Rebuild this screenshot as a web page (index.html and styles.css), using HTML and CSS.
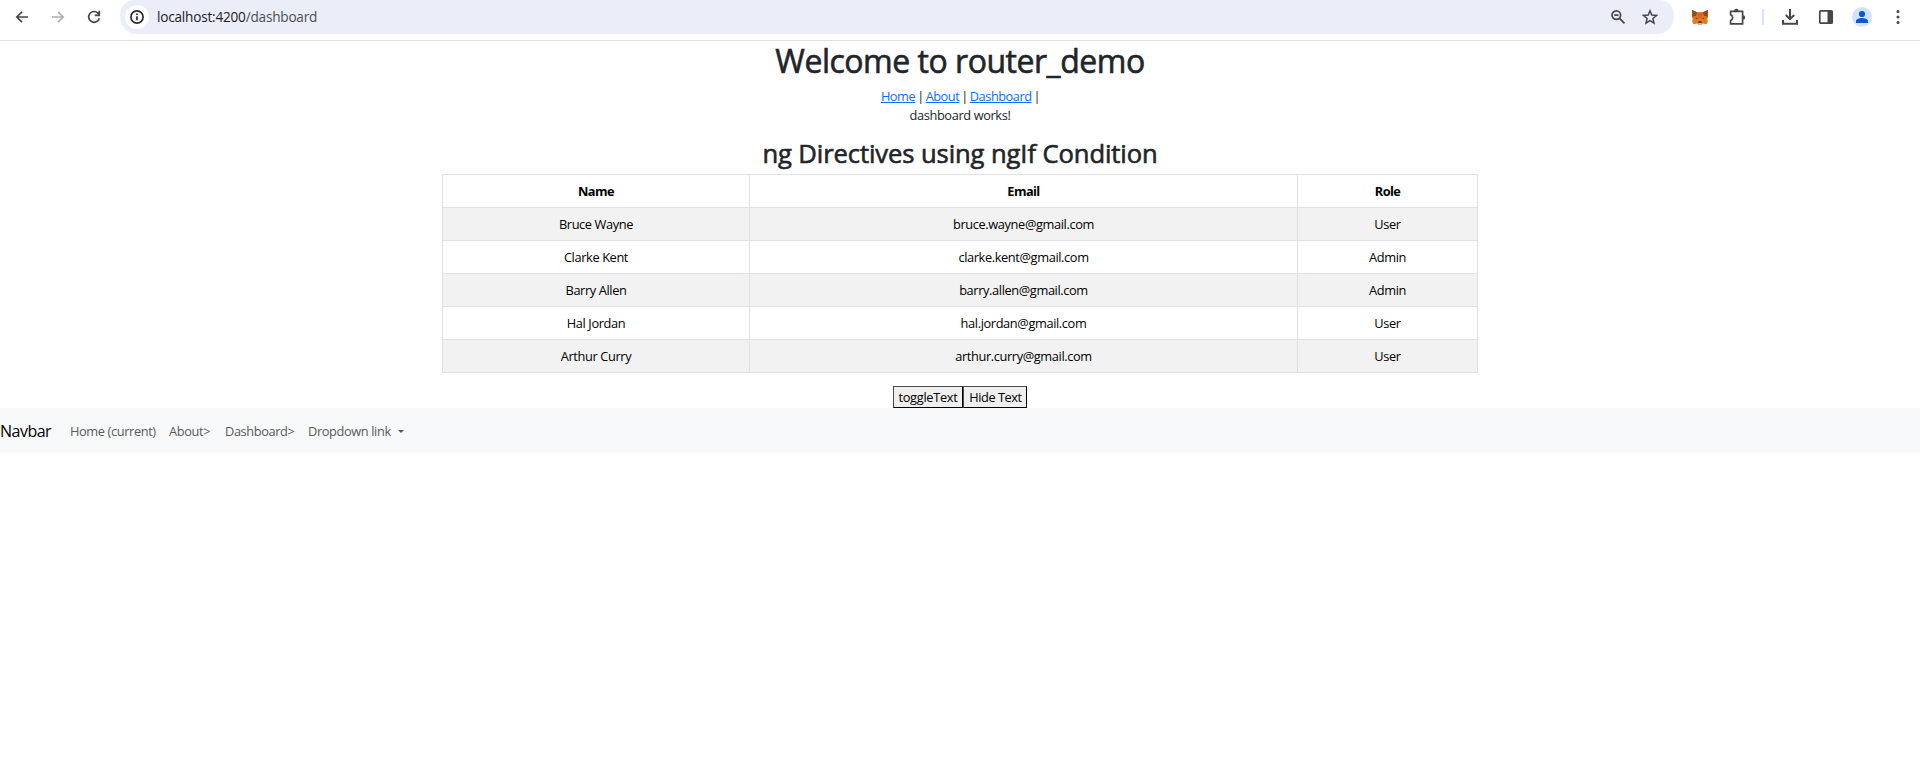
FILE: index.html
```html
<!DOCTYPE html>
<html lang="en">
<head>
<meta charset="utf-8">
<title>RouterDemo</title>
<link rel="stylesheet" href="styles.css">
</head>
<body>
<header class="toolbar">
  <div class="nav-buttons">
    <svg class="icon" viewBox="0 0 16 16"><path d="M14 8H3M8 2.8 2.8 8 8 13.2" /></svg>
    <svg class="icon disabled" viewBox="0 0 16 16"><path d="M2 8h11M8 2.8 13.2 8 8 13.2" /></svg>
    <svg class="icon" viewBox="0 0 16 16"><path d="M13.3 9.2A5.4 5.4 0 1 1 12 4.2L13.2 5.6M13.3 1.8v4.6H8.8" /></svg>
  </div>
  <div class="address">
    <span class="site-info"><svg class="icon" viewBox="0 0 16 16"><circle cx="8" cy="8" r="6.1"/><path d="M8 7.2v4M8 4.5v1.6"/></svg></span>
    <span class="url"><b>localhost:4200</b>/dashboard</span>
    <svg class="icon" viewBox="0 0 16 16"><circle cx="6.3" cy="6.1" r="4.3"/><path d="M9.5 9.3l5 5M4.2 6.1h4.2" /></svg>
    <svg class="icon star" viewBox="0 0 16 16"><path d="M8 1.8l1.8 4.3 4.7.4-3.6 3 1.1 4.6L8 11.6l-4 2.5 1.1-4.6-3.6-3 4.7-.4z"/></svg>
  </div>
  <div class="actions">
    <svg class="fox" viewBox="0 0 16 16"><path fill="#e8781f" d="M0 1l5.3 2.2h5.4L16 1v7l-.7 2.2.5 2.4-1.3 2.6-3.6-.7-1.6 1.2H6.7l-1.6-1.2-3.6.7L.2 12.6l.5-2.4L0 8z"/><path fill="#8a4a22" d="M0 1l5.3 2.6L4 6.8.5 8zM16 1l-5.3 2.6L12 6.8l3.5 1.2z"/><path fill="#d8651b" d="M5.3 3.4h5.4L10 9H6z"/><path fill="#43312c" d="M3.6 8.4l2.6 1.2-2.3.5zM12.4 8.4L9.8 9.6l2.3.5zM6.6 12.3h2.8l.4 1.6H6.2z"/><path fill="#d5bfb2" d="M6.2 13.9h3.6l-.6 1.3H6.8z"/></svg>
    <svg class="puzzle" viewBox="0 0 18 18"><path d="M2.600 3.400h12v12.400h-12v-3.200c2.700-1 2.700-5 0-6z"/><path class="solid" d="M6.200 3a2.200 2.200 0 0 1 4.400 0zM15 7.200a2.200 2.200 0 0 1 0 4.400z"/></svg>
    <span class="divider"></span>
    <svg class="download" viewBox="0 0 18 18"><path d="M9 1v9.800M4.800 7 9 11.200 13.200 7M2 12v3.800h14V12"/></svg>
    <svg class="icon panel" viewBox="0 0 16 16"><rect x="1.800" y="1.800" width="12.400" height="12.400" rx="1"/><path class="solid" d="M9.500 2h4.500v12H9.500z"/></svg>
    <svg class="avatar" viewBox="0 0 20 20"><circle cx="10" cy="10" r="10" fill="#d3e3fd"/><circle cx="10" cy="7" r="3.100" fill="#0b57d0"/><path fill="#0b57d0" d="M4 16v-1.800c0-2.200 3.500-3.100 6-3.100s6 .9 6 3.100V16z"/></svg>
    <svg class="dots" viewBox="0 0 4 16"><circle cx="2" cy="2.500" r="1.500"/><circle cx="2" cy="8" r="1.500"/><circle cx="2" cy="13.500" r="1.500"/></svg>
  </div>
</header>
<main class="page">
  <h1>Welcome to router_demo</h1>
  <nav class="links"><a href="#">Home</a> | <a href="#">About</a> | <a href="#">Dashboard</a> |</nav>
  <p class="works">dashboard works!</p>
  <h2>ng Directives using ngIf Condition</h2>
  <table class="users">
    <colgroup><col class="c-name"><col class="c-email"><col class="c-role"></colgroup>
    <thead><tr><th>Name</th><th>Email</th><th>Role</th></tr></thead>
    <tbody>
      <tr><td>Bruce Wayne</td><td>bruce.wayne@gmail.com</td><td>User</td></tr>
      <tr><td>Clarke Kent</td><td>clarke.kent@gmail.com</td><td>Admin</td></tr>
      <tr><td>Barry Allen</td><td>barry.allen@gmail.com</td><td>Admin</td></tr>
      <tr><td>Hal Jordan</td><td>hal.jordan@gmail.com</td><td>User</td></tr>
      <tr><td>Arthur Curry</td><td>arthur.curry@gmail.com</td><td>User</td></tr>
    </tbody>
  </table>
  <div class="buttons"><button class="toggle">toggleText</button><button class="hide">Hide Text</button></div>
</main>
<nav class="navbar">
  <a class="brand">Navbar</a>
  <a class="nav-home">Home (current)</a>
  <a class="nav-about">About&gt;</a>
  <a class="nav-dash">Dashboard&gt;</a>
  <a class="nav-drop">Dropdown link<span class="caret"></span></a>
</nav>
</body>
</html>
```
FILE: styles.css
```css
* { box-sizing: border-box; }
body {
  margin: 0;
  background: #fff;
  color: #212529;
  font: 12.8px/19.2px "Open Sans", "Noto Sans", sans-serif;
  letter-spacing: -0.38px;
}

/* Browser toolbar */
.toolbar {
  display: flex;
  height: 41px;
  padding: 0 17px 6px 14px;
  border-bottom: 1px solid #dfe0e2;
}
.toolbar svg { flex: none; fill: none; stroke: #474747; stroke-width: 1.7; }
.icon { width: 16px; height: 16px; }
.nav-buttons { display: flex; align-items: center; gap: 20px; width: 106px; }
.toolbar .disabled { stroke: #b0b0b0; }
.address {
  display: flex;
  align-items: center;
  width: 1554px;
  height: 34px;
  padding: 0 16px 0 5px;
  background: #ebeef8;
  border-radius: 15px 15px 17px 17px;
}
.site-info {
  display: flex;
  align-items: center;
  justify-content: center;
  width: 24px;
  height: 24px;
  border-radius: 50%;
  background: #fff;
}
.toolbar .site-info svg { stroke: #2b2b2b; }
.url { flex: 1; padding-left: 8px; font-size: 13.6px; letter-spacing: -0.21px; color: #4b4e54; }
.url b { font-weight: 400; color: #202226; }
.toolbar .star { margin-left: 16px; stroke-width: 1.5; }
.actions { display: flex; flex: 1; align-items: center; padding-left: 18px; }
.toolbar .fox { width: 16px; height: 16px; stroke: none; }
.puzzle { width: 18px; height: 18px; margin-left: 20px; }
.divider { width: 2px; height: 16px; margin-left: 16px; background: #d3e3fd; }
.toolbar .download { width: 18px; height: 18px; margin-left: 17px; stroke-width: 2; }
.panel { margin-left: 19px; }
.toolbar .solid { fill: #474747; stroke: none; }
.toolbar .avatar { width: 20px; height: 20px; margin-left: 18px; stroke: none; }
.toolbar .dots { width: 4px; height: 16px; margin-left: 24px; fill: #474747; stroke: none; }

/* Page */
.page { display: flex; flex-direction: column; align-items: center; padding-top: 1px; text-align: center; }
h1, h2 { font-weight: 500; -webkit-text-stroke: 0.6px currentColor; }
h1 { margin: 0 0 6.4px; font-size: 32px; line-height: 38.4px; letter-spacing: -0.48px; }
h2 { margin: 0 0 5.4px; font-size: 25.6px; line-height: 30.7px; letter-spacing: -0.1px; }
.links { padding-left: 1px; letter-spacing: -0.47px; word-spacing: -0.9px; }
.links a { color: #0d6efd; text-decoration: underline; }
.works { margin: 0 0 13.8px; }
.users {
  width: 1036px;
  margin: -1px 0 13px;
  border-collapse: collapse;
  table-layout: fixed;
  color: #000;
}
.c-name { width: 307px; }
.c-email { width: 548px; }
.c-role { width: 180px; }
.users th, .users td { height: 33px; padding: 2px 0 0; border: 1px solid #dee2e6; }
.users th { letter-spacing: -0.6px; }
.users tbody tr:nth-child(odd) { background: #f2f2f2; }
.buttons { display: flex; }
.buttons button {
  height: 22px;
  padding: 1px 0 0;
  border: 1px solid #000;
  border-top-color: #4c4c4c;
  border-left-color: #4c4c4c;
  background: #efefef;
  color: #000;
  font: inherit;
  letter-spacing: -0.3px;
}
.buttons .toggle { width: 70px; }
.buttons .hide { width: 64px; padding-left: 1px; letter-spacing: -0.45px; }

/* Bottom navbar */
.navbar {
  display: flex;
  align-items: center;
  height: 45px;
  padding-top: 2px;
  background: #f8f9fa;
  color: #595a5b;
}
.brand { width: 70px; font-size: 16px; letter-spacing: -0.5px; color: #000; }
.nav-home { width: 99px; }
.nav-about { width: 56px; }
.nav-dash { width: 83px; letter-spacing: -0.4px; }
.nav-drop { display: flex; align-items: center; gap: 7px; }
.caret {
  border: 3.5px solid transparent;
  border-top-color: currentColor;
  border-bottom: 0;
}
```
